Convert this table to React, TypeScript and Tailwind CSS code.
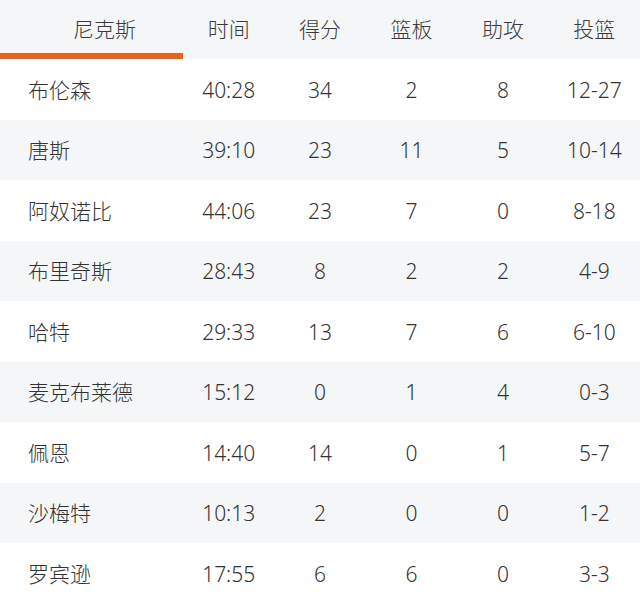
const players: [string, string, string, string, string, string][] = [
  ['布伦森', '40:28', '34', '2', '8', '12-27'],
  ['唐斯', '39:10', '23', '11', '5', '10-14'],
  ['阿奴诺比', '44:06', '23', '7', '0', '8-18'],
  ['布里奇斯', '28:43', '8', '2', '2', '4-9'],
  ['哈特', '29:33', '13', '7', '6', '6-10'],
  ['麦克布莱德', '15:12', '0', '1', '4', '0-3'],
  ['佩恩', '14:40', '14', '0', '1', '5-7'],
  ['沙梅特', '10:13', '2', '0', '0', '1-2'],
  ['罗宾逊', '17:55', '6', '6', '0', '3-3'],
]

const heads = ['时间', '得分', '篮板', '助攻', '投篮']

export default function App() {
  return (
    <div
      className="w-[640px] h-[604px] bg-white text-[#333] text-[21px] font-light overflow-hidden"
      style={{ fontFamily: '"Noto Sans", "Noto Sans CJK SC", sans-serif' }}
    >
      {/* header */}
      <div className="grid grid-cols-[183px_repeat(5,1fr)] h-[59px] bg-[#f5f6f8] text-[#3a3a3a]">
        <div className="relative flex items-center pl-[73px]">
          尼克斯
          <div className="absolute left-0 right-0 bottom-0 h-[6px] bg-[#e8621d]" />
        </div>
        {heads.map(h => (
          <div key={h} className="flex items-center justify-center">{h}</div>
        ))}
      </div>

      {/* rows */}
      {players.map((p, i) => (
        <div
          key={p[0]}
          className={`grid grid-cols-[183px_repeat(5,1fr)] h-[60.5px] pt-[2px] ${i % 2 === 1 ? 'bg-[#f5f6f8]' : 'bg-white'}`}
        >
          <div className="flex items-center pl-[28px]">{p[0]}</div>
          {p.slice(1).map((v, j) => (
            <div key={j} className="flex items-center justify-center">{v}</div>
          ))}
        </div>
      ))}
    </div>
  )
}
